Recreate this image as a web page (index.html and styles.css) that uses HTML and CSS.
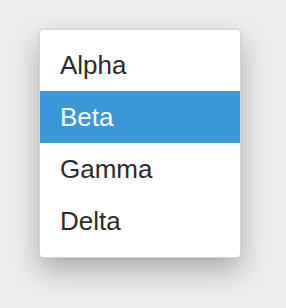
FILE: index.html
```html
<!DOCTYPE html>
<html>
<head>
<meta charset="utf-8">
<link rel="stylesheet" href="styles.css">
</head>
<body>
<div class="stage">
  <ul class="menu">
    <li class="item">Alpha</li>
    <li class="item active">Beta</li>
    <li class="item">Gamma</li>
    <li class="item">Delta</li>
  </ul>
</div>
</body>
</html>
```
FILE: styles.css
```css
html, body {
  margin: 0;
  padding: 0;
  background: #ededed;
}
.stage {
  width: 286px;
  height: 308px;
  padding: 29px 0 0 39px;
  box-sizing: border-box;
}
.menu {
  list-style: none;
  margin: 0;
  padding: 9px 0 10px;
  width: 200px;
  background: #fff;
  border: 1px solid #d6d6d6;
  border-radius: 4px;
  box-shadow: 0 0 0 1px rgba(0, 0, 0, 0.03), 0 12px 28px rgba(0, 0, 0, 0.28);
  font-family: "Liberation Sans", Arial, sans-serif;
  font-size: 26px;
  color: #2b2b2b;
}
.item {
  padding: 11px 20px 11px 20px;
  line-height: 30px;
}
.item.active {
  background: #3a98d8;
  color: #fff;
}
```
